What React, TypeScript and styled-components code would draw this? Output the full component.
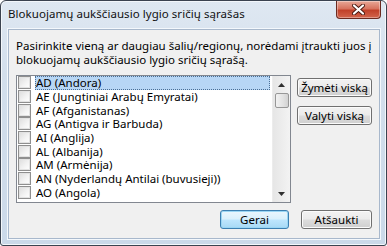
import styled, { createGlobalStyle } from "styled-components";

const GlobalStyle = createGlobalStyle`
  html, body {
    margin: 0;
    padding: 0;
    background: #ffffff;
  }
  body {
    font-family: "Noto Sans", "DejaVu Sans", sans-serif;
    font-size: 12px;
    color: #000;
  }
`;

const Window = styled.div`
  width: 387px;
  height: 246px;
  box-sizing: border-box;
  border: 1px solid #3b4350;
  border-radius: 6px 6px 3px 3px;
  background: linear-gradient(180deg, #dfe8f2 0%, #d3dfec 30%, #cbd9e9 100%);
  box-shadow: inset 0 0 0 1px #f3f7fb;
  display: flex;
  flex-direction: column;
  overflow: hidden;
`;

const TitleBar = styled.div`
  height: 28px;
  display: flex;
  justify-content: space-between;
  align-items: flex-start;
  padding-left: 7px;
`;

const Title = styled.span`
  margin-top: 5px;
  font-size: 11.5px;
  letter-spacing: 0.05px;
  color: #111;
`;

const CloseButton = styled.div`
  width: 43px;
  height: 17px;
  margin-right: 5px;
  border: 1px solid #6b2a20;
  border-top: none;
  border-radius: 0 0 4px 4px;
  background: linear-gradient(180deg, #e8a898 0%, #d7735f 45%, #c1412a 55%, #d2654c 100%);
  box-shadow: inset 0 0 0 1px rgba(255, 255, 255, 0.35);
  display: flex;
  align-items: center;
  justify-content: center;
`;

const Client = styled.div`
  flex: 1;
  margin: 0 6px 6px 7px;
  border: 1px solid #a8b8cc;
  box-shadow: 0 0 0 1px #f4f8fc;
  background: #f0f0f0;
  display: flex;
  flex-direction: column;
  padding: 9px 7px 0 7px;
`;

const Intro = styled.p`
  margin: 0;
  font-size: 11.5px;
  line-height: 14px;
`;

const Body = styled.div`
  display: flex;
  gap: 6px;
  margin-top: 8px;
`;

const ListBox = styled.div`
  width: 276px;
  height: 128px;
  box-sizing: border-box;
  border: 1px solid #828790;
  background: #fff;
  display: flex;
  overflow: hidden;
`;

const Rows = styled.div`
  flex: 1;
  display: flex;
  flex-direction: column;
`;

const Row = styled.div`
  height: 13.7px;
  display: flex;
  align-items: center;
  padding-left: 1px;
  white-space: nowrap;
  font-size: 11.5px;
`;

const Box = styled.span`
  width: 11px;
  height: 11px;
  border: 1px solid #8f8f8f;
  background: linear-gradient(135deg, #dcdcdc 0%, #f4f4f4 60%, #ffffff 100%);
  box-shadow: inset 0 0 0 1px #e2e2e2;
  flex-shrink: 0;
  margin-right: 4px;
`;

const Label = styled.span<{ $selected?: boolean }>`
  flex: 1;
  height: 100%;
  display: flex;
  align-items: center;
  padding-left: 1px;
  box-sizing: border-box;
  background: ${(p) => (p.$selected ? "#b7d6f5" : "transparent")};
  outline: ${(p) => (p.$selected ? "1px dotted #4a6f96" : "none")};
  outline-offset: -1px;
  margin-right: 2px;
`;

const ScrollBar = styled.div`
  width: 17px;
  background: linear-gradient(90deg, #e6e6e6, #f3f3f3);
  border-left: 1px solid #ececec;
  display: flex;
  flex-direction: column;
  align-items: center;
`;

const Arrow = styled.div`
  height: 17px;
  width: 100%;
  display: flex;
  align-items: center;
  justify-content: center;
`;

const Thumb = styled.div`
  width: 14px;
  height: 15px;
  box-sizing: border-box;
  border: 1px solid #979797;
  border-radius: 2px;
  background: linear-gradient(90deg, #f2f2f2, #e1e1e1 60%, #d2d2d2);
`;

const Track = styled.div`
  flex: 1;
`;

const SideButtons = styled.div`
  display: flex;
  flex-direction: column;
  gap: 9px;
  padding-top: 3px;
`;

const Button = styled.div<{ $default?: boolean; $w: number }>`
  width: ${(p) => p.$w}px;
  height: 19px;
  box-sizing: border-box;
  border: 1px solid ${(p) => (p.$default ? "#3c7fb1" : "#707070")};
  border-radius: 3px;
  background: ${(p) =>
    p.$default
      ? "linear-gradient(180deg, #eaf6fd 0%, #d9f0fc 48%, #bee6fd 52%, #a7d9f5 100%)"
      : "linear-gradient(180deg, #f2f2f2 0%, #ebebeb 48%, #dddddd 52%, #cfcfcf 100%)"};
  box-shadow: inset 0 0 0 1px ${(p) => (p.$default ? "#9ad6f4" : "#fbfbfb")};
  display: flex;
  align-items: center;
  justify-content: center;
  font-size: 11.5px;
`;

const Footer = styled.div`
  display: flex;
  justify-content: flex-end;
  gap: 12px;
  margin-top: 7px;
  padding-right: 0;
`;

const countries = [
  "AD (Andora)",
  "AE (Jungtiniai Arabų Emyratai)",
  "AF (Afganistanas)",
  "AG (Antigva ir Barbuda)",
  "AI (Anglija)",
  "AL (Albanija)",
  "AM (Armėnija)",
  "AN (Nyderlandų Antilai (buvusieji))",
  "AO (Angola)",
];

export default function App() {
  return (
    <>
      <GlobalStyle />
      <Window>
        <TitleBar>
          <Title>Blokuojamų aukščiausio lygio sričių sąrašas</Title>
          <CloseButton>
            <svg width="13" height="11" viewBox="0 0 13 11">
              <path
                d="M2 1.5 L11 9.5 M11 1.5 L2 9.5"
                stroke="#4a1a12"
                strokeWidth="4"
                strokeLinecap="round"
              />
              <path
                d="M2 1.5 L11 9.5 M11 1.5 L2 9.5"
                stroke="#ffffff"
                strokeWidth="2.2"
                strokeLinecap="round"
              />
            </svg>
          </CloseButton>
        </TitleBar>
        <Client>
          <Intro>
            Pasirinkite vieną ar daugiau šalių/regionų, norėdami įtraukti juos į
            <br />
            blokuojamų aukščiausio lygio sričių sąrašą.
          </Intro>
          <Body>
            <ListBox>
              <Rows>
                {countries.map((c, i) => (
                  <Row key={c}>
                    <Box />
                    <Label $selected={i === 0}>{c}</Label>
                  </Row>
                ))}
              </Rows>
              <ScrollBar>
                <Arrow>
                  <svg width="7" height="4" viewBox="0 0 7 4">
                    <path d="M0 4 L3.5 0 L7 4 Z" fill="#303030" />
                  </svg>
                </Arrow>
                <Thumb />
                <Track />
                <Arrow>
                  <svg width="7" height="4" viewBox="0 0 7 4">
                    <path d="M0 0 L3.5 4 L7 0 Z" fill="#303030" />
                  </svg>
                </Arrow>
              </ScrollBar>
            </ListBox>
            <SideButtons>
              <Button $w={75}>Žymėti viską</Button>
              <Button $w={75}>Valyti viską</Button>
            </SideButtons>
          </Body>
          <Footer>
            <Button $default $w={69}>
              Gerai
            </Button>
            <Button $w={71}>Atšaukti</Button>
          </Footer>
        </Client>
      </Window>
    </>
  );
}
